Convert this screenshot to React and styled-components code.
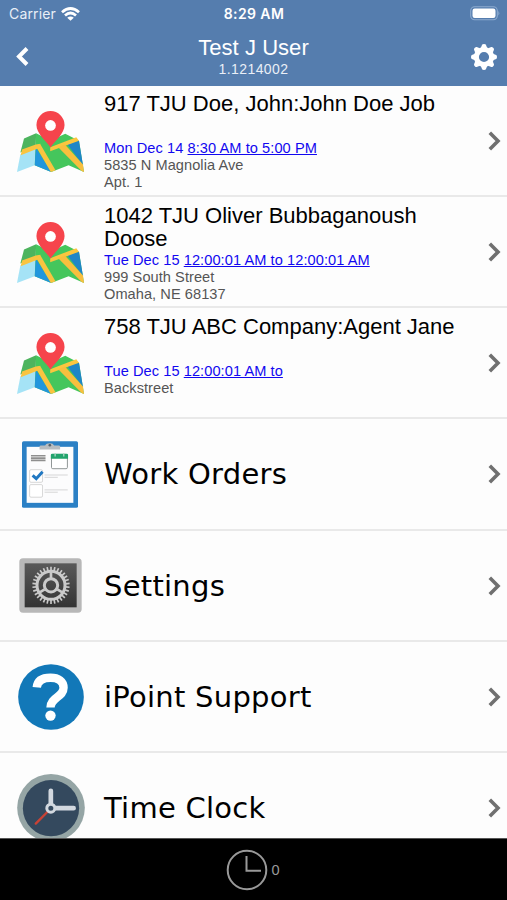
import styled, { createGlobalStyle } from "styled-components";

const jobs = [
    {
        title: "917 TJU Doe, John:John Doe Job",
        day: "Mon Dec 14",
        time: "8:30 AM to 5:00 PM",
        address: ["5835 N Magnolia Ave", "Apt. 1"],
    },
    {
        title: "1042 TJU Oliver Bubbaganoush Doose",
        day: "Tue Dec 15",
        time: "12:00:01 AM to 12:00:01 AM",
        address: ["999 South Street", "Omaha, NE 68137"],
    },
    {
        title: "758 TJU ABC Company:Agent Jane",
        day: "Tue Dec 15",
        time: "12:00:01 AM to",
        address: ["Backstreet"],
    },
];

const MapIcon = () => (
    <svg width="67" height="61" viewBox="51 60 200 182">
        <path d="M72 142 L108 126 L107 166 L61 184 Z" fill="#4db45e" />
        <path d="M61 190 L107 165 L104 222 L51 242 Z" fill="#a5e3f6" />
        <path d="M108 126 L151 148 L195 128 L236 149 L251 242 L205 222 L153 242 L104 222 Z" fill="#45c65c" />
        <path d="M107 168 L153 242 L104 222 Z" fill="#2196dc" />
        <path d="M200 158 L236 149 L248 222 Z" fill="#1f86c6" />
        <path d="M66 175 L107 160 L121 158 L119 170 L62 192 Z" fill="#f9c440" />
        <path d="M106 163 L121 160 L166 237 L152 242 Z" fill="#f9c440" />
        <path d="M150 168 L228 138 L236 149 L150 180 Z" fill="#fbc63f" />
        <path d="M174 168 L194 160 L248 220 L251 242 L244 239 Z" fill="#f8bf3e" />
        <path d="M151 169 C139 151 109 128 109 102 A42 42 0 0 1 193 102 C193 128 163 151 151 169 Z" fill="#f6444c" />
        <circle cx="151" cy="103" r="16" fill="#fff" />
    </svg>
);

const ClipboardIcon = () => (
    <svg width="57" height="67" viewBox="66 48 172 201">
        <rect x="66" y="48" width="169" height="201" rx="5" fill="#2b80c5" />
        <rect x="80" y="65" width="141" height="169" fill="#fcfcfd" />
        <path d="M119 73 V64 Q119 61 123 61 H136 Q139 54 150 54 Q160 54 163 61 H177 Q181 61 181 65 V73 Z" fill="#b8bcc0" />
        <circle cx="150" cy="60" r="4" fill="#59636c" />
        <path d="M93 92 H137 M93 99 H137 M93 106 H137" stroke="#8f8f8f" strokeWidth="5" />
        <rect x="155" y="88" width="48" height="43" rx="4" fill="#fff" stroke="#8f9595" strokeWidth="3" />
        <path d="M153 101 V90 Q153 86 157 86 H201 Q205 86 205 90 V101 Z" fill="#22a46d" />
        <path d="M166 84 V94 M192 84 V94" stroke="#a9d5c2" strokeWidth="4" />
        <rect x="89" y="134" width="39" height="38" rx="4" fill="#fff" stroke="#c2c2c2" strokeWidth="2" />
        <rect x="89" y="179" width="39" height="38" rx="4" fill="#fff" stroke="#c2c2c2" strokeWidth="2" />
        <path d="M98 151 L109 161 L128 140" fill="none" stroke="#2178c2" strokeWidth="9" />
        <path d="M134 150 H204 M134 157 H174 M134 195 H204 M134 202 H174" stroke="#cfcfcf" strokeWidth="2.500" />
    </svg>
);

const TEETH = 30;
const teeth = Array.from({ length: TEETH }, (_, i) => (i * 360) / TEETH);

const SettingsIcon = () => (
    <svg width="63" height="55" viewBox="56 52 189 165">
        <defs>
            <linearGradient id="panel" x1="0" y1="0" x2="0" y2="1">
                <stop offset="0" stopColor="#595959" />
                <stop offset="1" stopColor="#333" />
            </linearGradient>
        </defs>
        <rect x="57" y="53" width="187" height="163" rx="11" fill="#b8b8b8" />
        <rect x="73" y="68" width="156" height="132" fill="url(#panel)" />
        <g stroke="#cacaca" fill="none">
            {teeth.map((angle) => (
                <path key={angle} d="M152 90 V78" strokeWidth="5" transform={`rotate(${angle} 152 134)`} />
            ))}
            <circle cx="152" cy="134" r="42" strokeWidth="9" />
            <circle cx="152" cy="134" r="20" strokeWidth="9" />
            <path d="M152 112 V94 M133 146 L118 155 M171 146 L186 155" strokeWidth="8" />
        </g>
    </svg>
);

const SupportIcon = () => (
    <svg width="66" height="66" viewBox="53 41 197 197">
        <circle cx="151.500" cy="139.500" r="98" fill="#1278b8" />
        <path
            d="M109 111 C111 91 126 82 150 82 C174 82 189 92 189 112 C189 140 150 140 150 171"
            fill="none"
            stroke="#fff"
            strokeWidth="25"
        />
        <circle cx="150" cy="195" r="15.500" fill="#fff" />
    </svg>
);

const TimeIcon = () => (
    <svg width="68" height="68" viewBox="50 41 203 203">
        <circle cx="151.500" cy="142" r="101" fill="#95a5a5" />
        <circle cx="151.500" cy="143" r="84" fill="#34495e" />
        <path d="M145 150 L106 189" stroke="#c94235" strokeWidth="7" strokeLinecap="round" />
        <path d="M151 130 V91 M165 143 H219" stroke="#d2d8df" strokeWidth="14" strokeLinecap="round" />
        <circle cx="151" cy="143" r="12" fill="#34495e" stroke="#d2d8df" strokeWidth="9" />
    </svg>
);

const WifiIcon = () => (
    <svg width="19" height="14" viewBox="0 0 19 14">
        <g fill="none" stroke="#fff" strokeWidth="2.700">
            <path d="M1 5.300 Q9.500 -2.300 18 5.300" />
            <path d="M4 8.500 Q9.500 3.500 15 8.500" />
        </g>
        <path d="M9.500 13.800 L6.200 10.700 Q9.500 8.100 12.800 10.700 Z" fill="#fff" />
    </svg>
);

const BatteryIcon = () => (
    <svg width="30" height="15" viewBox="0 0 30 15">
        <rect x="0.700" y="0.700" width="26.600" height="13" rx="4" fill="none" stroke="#8dabd0" strokeWidth="1.100" />
        <rect x="2.500" y="2.500" width="23" height="9.500" rx="2.200" fill="#fff" />
        <path d="M28.400 5 Q30.200 7.200 28.400 9.500 Z" fill="#8dabd0" />
    </svg>
);

const GearIcon = () => (
    <svg width="28" height="28" viewBox="-14 -14 28 28">
        <circle r="7.600" fill="none" stroke="#fff" strokeWidth="5" />
        {[0, 45, 90, 135, 180, 225, 270, 315].map((angle) => (
            <path
                key={angle}
                d="M-3.200 -9 L-1.900 -12.200 Q-1.500 -13 0 -13 Q1.500 -13 1.900 -12.200 L3.200 -9 Z"
                fill="#fff"
                transform={`rotate(${angle})`}
            />
        ))}
    </svg>
);

const menu = [
    { label: "Work Orders", Icon: ClipboardIcon },
    { label: "Settings", Icon: SettingsIcon },
    { label: "iPoint Support", Icon: SupportIcon },
    { label: "Time Clock", Icon: TimeIcon },
];

const Chevron = () => (
    <ChevronSvg width="13" height="20" viewBox="0 0 13 20">
        <path d="M1.800 1.800 L10 10 L1.800 18.200" />
    </ChevronSvg>
);

const App = () => {
    return (
        <>
            <GlobalStyle />
            <Wrapper>
                <Header>
                    <StatusBar>
                        <Carrier>
                            Carrier
                            <WifiIcon />
                        </Carrier>
                        <Clock>8:29 AM</Clock>
                        <Battery>
                            <BatteryIcon />
                        </Battery>
                    </StatusBar>
                    <NavBar>
                        <BackButton aria-label="Back">
                            <svg width="13" height="19" viewBox="0 0 13 19">
                                <path d="M11 1.500 L3 9.500 L11 17.500" fill="none" stroke="#fff" strokeWidth="4" />
                            </svg>
                        </BackButton>
                        <Heading>
                            <UserName>Test J User</UserName>
                            <Version>1.1214002</Version>
                        </Heading>
                        <GearButton aria-label="Settings">
                            <GearIcon />
                        </GearButton>
                    </NavBar>
                </Header>
                <List>
                    {jobs.map((job) => (
                        <Row key={job.title}>
                            <IconCell>
                                <MapIcon />
                            </IconCell>
                            <JobText>
                                <JobTitle>{job.title}</JobTitle>
                                <JobDate>
                                    {job.day} <JobTime>{job.time}</JobTime>
                                </JobDate>
                                {job.address.map((line) => (
                                    <Address key={line}>{line}</Address>
                                ))}
                            </JobText>
                            <Chevron />
                        </Row>
                    ))}
                    {menu.map(({ label, Icon }) => (
                        <Row key={label}>
                            <IconCell>
                                <Icon />
                            </IconCell>
                            <MenuLabel>{label}</MenuLabel>
                            <Chevron />
                        </Row>
                    ))}
                </List>
                <Footer>
                    <svg width="42" height="42" viewBox="0 0 42 42">
                        <g fill="none" stroke="#999" strokeWidth="2">
                            <circle cx="21" cy="21" r="19.300" />
                            <path d="M20.500 7 V21.800 H35" />
                        </g>
                    </svg>
                    <Count>0</Count>
                </Footer>
            </Wrapper>
        </>
    );
};

const GlobalStyle = createGlobalStyle`
    * {
        box-sizing: border-box;
    }

    body {
        margin: 0;
        font-family: "Liberation Sans", Arial, sans-serif;
    }
`

const Wrapper = styled.div`
    display: flex;
    flex-direction: column;
    width: 507px;
    height: 900px;
    background-color: #fdfdfd;
    overflow: hidden;
`

const Header = styled.header`
    flex: none;
    height: 86px;
    background-color: #557dae;
    color: #fff;
`

const StatusBar = styled.div`
    display: grid;
    grid-template-columns: 1fr auto 1fr;
    align-items: center;
    height: 27px;
    padding: 0 7px 0 9px;
    font-family: Inter, "Liberation Sans", sans-serif;
    font-size: 14px;
`

const Carrier = styled.div`
    display: flex;
    align-items: center;
    gap: 5px;
    color: #e9eff7;
    letter-spacing: 0.15px;
`

const Clock = styled.div`
    margin-right: 1px;
    font-weight: 600;
    letter-spacing: 0.4px;
`

const Battery = styled.div`
    display: flex;
    justify-content: flex-end;
`

const NavBar = styled.div`
    display: grid;
    grid-template-columns: 60px 1fr 60px;
    height: 59px;
`

const BackButton = styled.button`
    display: flex;
    align-items: center;
    border: none;
    background: none;
    padding: 0 0 0 16px;
`

const Heading = styled.div`
    display: flex;
    flex-direction: column;
    align-items: center;
    padding-top: 8px;
`

const UserName = styled.h1`
    margin: 0;
    font-size: 22px;
    font-weight: normal;
    line-height: 25px;
    letter-spacing: 0.05px;
`

const Version = styled.div`
    padding-top: 1px;
    font-size: 14px;
    line-height: 17px;
    letter-spacing: 0.4px;
    color: #e9eff7;
`

const GearButton = styled.button`
    display: flex;
    align-items: center;
    justify-content: flex-end;
    border: none;
    background: none;
    padding: 0 9px 0 0;
`

const List = styled.main`
    flex: 1;
    min-height: 0;
    overflow: hidden;
`

const Row = styled.div`
    display: flex;
    align-items: center;
    height: 111.15px;
    padding: 1px 6px 0 0;
    border-bottom: 2px solid #e9e9e9;
`

const IconCell = styled.div`
    flex: none;
    display: flex;
    justify-content: center;
    width: 101px;
    margin-right: 3px;
`

const JobText = styled.div`
    flex: 1;
    align-self: flex-start;
    padding: 5.4px 20px 0 0;
`

const JobTitle = styled.h2`
    margin: 0 0 2px;
    min-height: 46px;
    font-size: 22px;
    font-weight: normal;
    line-height: 23px;
    color: #000;
`

const JobDate = styled.div`
    font-size: 14.6px;
    line-height: 17px;
    letter-spacing: 0.07px;
    color: #1208f0;
`

const JobTime = styled.span`
    text-decoration: underline;
`

const Address = styled.div`
    font-size: 14.6px;
    line-height: 17px;
    letter-spacing: 0.05px;
    color: #555;
`

const MenuLabel = styled.div`
    flex: 1;
    font-family: "DejaVu Sans", Verdana, sans-serif;
    font-size: 29px;
    line-height: 34px;
    letter-spacing: 0.26px;
    color: #000;
`

const ChevronSvg = styled.svg`
    flex: none;
    fill: none;
    stroke: #707070;
    stroke-width: 3.6px;
`

const Footer = styled.footer`
    flex: none;
    display: flex;
    align-items: center;
    justify-content: center;
    gap: 3px;
    height: 62px;
    padding-right: 1px;
    border-top: 1px solid #555;
    background-color: #000;
`

const Count = styled.span`
    font-size: 14.6px;
    color: #999;
`

export default App;
